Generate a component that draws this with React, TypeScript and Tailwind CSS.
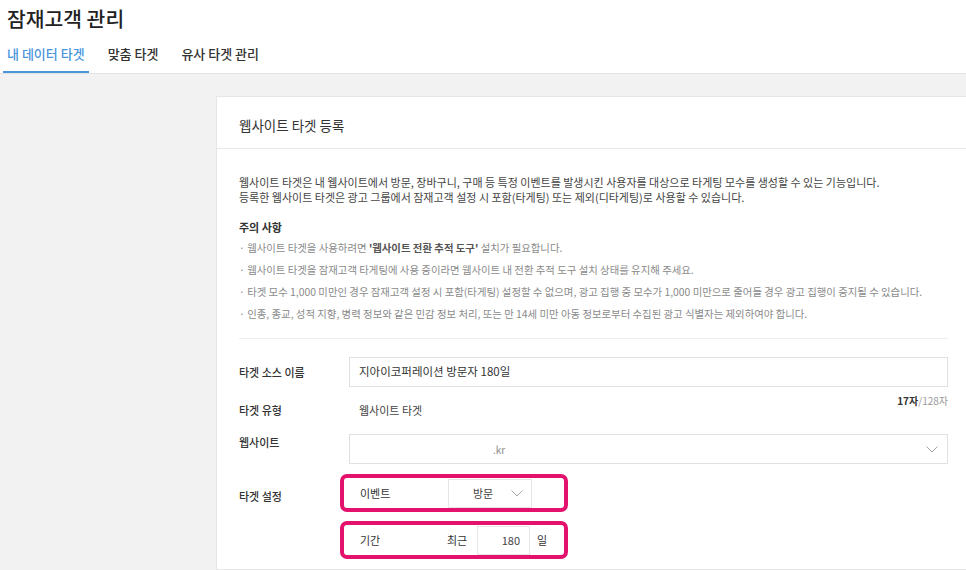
import React from "react";

const KR = { fontFamily: '"Noto Sans CJK KR", "Noto Sans", sans-serif' };

function Chevron({ className = "" }: { className?: string }) {
  return (
    <svg width="12" height="7" viewBox="0 0 12 7" className={className}>
      <polyline points="0.5,0.5 6,6 11.5,0.5" fill="none" stroke="#a8a8a8" strokeWidth="1" />
    </svg>
  );
}

const notices: React.ReactNode[] = [
  <>
    웹사이트 타겟을 사용하려면 <b className="font-bold text-[#555]">'웹사이트 전환 추적 도구'</b> 설치가 필요합니다.
  </>,
  <>웹사이트 타겟을 잠재고객 타게팅에 사용 중이라면 웹사이트 내 전환 추적 도구 설치 상태를 유지해 주세요.</>,
  <>
    타겟 모수 1,000 미만인 경우 잠재고객 설정 시 포함(타게팅) 설정할 수 없으며, 광고 집행 중 모수가 1,000 미만으로 줄어들 경우 광고 집행이 중지될 수 있습니다.
  </>,
  <>인종, 종교, 성적 지향, 병력 정보와 같은 민감 정보 처리, 또는 만 14세 미만 아동 정보로부터 수집된 광고 식별자는 제외하여야 합니다.</>,
];

export default function App() {
  return (
    <div style={KR} className="w-[966px] h-[570px] overflow-hidden bg-white text-[#333] flex flex-col">
      {/* page header */}
      <div className="h-[74px] shrink-0 border-b border-[#e3e3e3] bg-white">
        <h1 className="h-[36px] pl-[7px] text-[20.4px] leading-[36px] font-medium text-[#222]">
          잠재고객 관리
        </h1>
        <div className="ml-[3px] flex h-[37px] gap-[15px] text-[13px] font-medium">
          <div className="px-[4px] pt-[8px] border-b-2 border-[#4a96dc] text-[#4a96dc]">내 데이터 타겟</div>
          <div className="px-[4px] pt-[8px] text-[#333]">맞춤 타겟</div>
          <div className="px-[4px] pt-[8px] text-[#333]">유사 타겟 관리</div>
        </div>
      </div>

      {/* gray workspace */}
      <div className="flex-1 bg-[#f2f2f2] pt-[22px] pl-[216px]">
        <div className="w-[760px] h-full bg-white border border-[#e6e6e6]">
          <div className="h-[52px] flex items-center pl-[22px] pt-[5px] border-b border-[#e8e8e8] text-[13.5px] text-[#333]">
            웹사이트 타겟 등록
          </div>

          <div className="pl-[22px] pr-[27px] pt-[26px]">
            <p className="text-[11px] leading-[15px] text-[#444]">
              웹사이트 타겟은 내 웹사이트에서 방문, 장바구니, 구매 등 특정 이벤트를 발생시킨 사용자를 대상으로 타게팅 모수를 생성할 수 있는 기능입니다.
              <br />
              등록한 웹사이트 타겟은 광고 그룹에서 잠재고객 설정 시 포함(타게팅) 또는 제외(디타게팅)로 사용할 수 있습니다.
            </p>

            <h3 className="mt-[14px] text-[11px] leading-[16px] font-bold text-[#333]">주의 사항</h3>
            <ul className="mt-[2px] text-[10.4px] leading-[22px] text-[#8a8a8a]">
              {notices.map((n, i) => (
                <li key={i}>· {n}</li>
              ))}
            </ul>

            <div className="mt-[13px] border-t border-[#eeeeee]" />

            {/* target source name */}
            <div className="mt-[18px] flex items-center h-[30px]">
              <div className="w-[110px] text-[11px] font-medium text-[#333]">타겟 소스 이름</div>
              <div className="flex-1 h-[30px] border border-[#e0e0e0] flex items-center pl-[9px] text-[11.5px] text-[#333]">
                지아이코퍼레이션 방문자 180일
              </div>
            </div>

            {/* target type + counter */}
            <div className="flex items-start h-[38px]">
              <div className="w-[110px] pt-[15px] text-[11px] leading-[16px] font-medium text-[#333]">타겟 유형</div>
              <div className="flex-1 pt-[15px] pl-[10px] text-[11px] leading-[16px] text-[#444]">웹사이트 타겟</div>
              <div className="pt-[7px] text-[10px] leading-[14px] text-[#999]">
                <b className="font-bold text-[#333]">17자</b>/128자
              </div>
            </div>

            {/* website */}
            <div className="mt-[9px] flex items-start">
              <div className="w-[110px] text-[11px] leading-[16px] font-medium text-[#333]">웹사이트</div>
              <div className="flex-1 h-[30px] border border-[#e0e0e0] flex items-center justify-between pl-[143px] pr-[9px] text-[10px] text-[#888]">
                <span>.kr</span>
                <Chevron />
              </div>
            </div>

            {/* target setting */}
            <div className="mt-[10px] flex items-start">
              <div className="w-[101px] pt-[14px] text-[11px] leading-[16px] font-medium text-[#333]">타겟 설정</div>
              <div className="flex flex-col gap-[9px]">
                <div className="w-[228px] h-[38px] border-4 border-[#e2126d] rounded-[7px] flex items-center pl-[16px]">
                  <div className="w-[88px] text-[11px] text-[#333]">이벤트</div>
                  <div className="w-[84px] h-[29px] border border-[#e6e6e6] flex items-center justify-between pl-[24px] pr-[8px] text-[11px] text-[#444]">
                    <span>방문</span>
                    <Chevron />
                  </div>
                </div>
                <div className="w-[228px] h-[38px] border-4 border-[#e2126d] rounded-[7px] flex items-center pl-[16px]">
                  <div className="w-[87px] text-[11px] text-[#333]">기간</div>
                  <div className="w-[30px] text-[11px] text-[#333]">최근</div>
                  <div className="w-[53px] h-[29px] border border-[#e6e6e6] flex items-center justify-end pr-[9px] text-[11px] text-[#444]">
                    180
                  </div>
                  <div className="ml-[7px] text-[11px] text-[#333]">일</div>
                </div>
              </div>
            </div>
          </div>
        </div>
      </div>
    </div>
  );
}
